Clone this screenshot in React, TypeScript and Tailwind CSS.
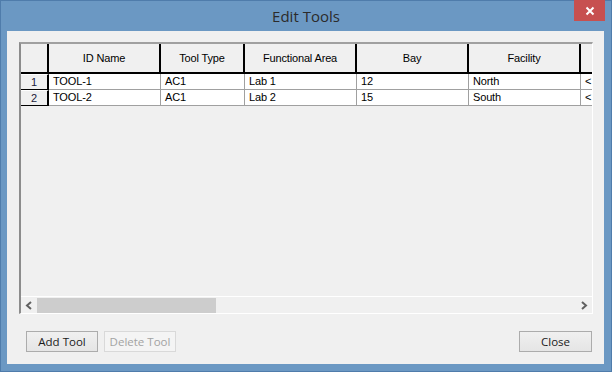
import React from 'react';

const cols = [
  { name: 'ID Name', w: 'w-[112px]' },
  { name: 'Tool Type', w: 'w-[84px]' },
  { name: 'Functional Area', w: 'w-[112px]' },
  { name: 'Bay', w: 'w-[112px]' },
  { name: 'Facility', w: 'w-[112px]' },
  { name: '', w: 'w-[60px]' },
];

const rows = [
  ['TOOL-1', 'AC1', 'Lab 1', '12', 'North', '<'],
  ['TOOL-2', 'AC1', 'Lab 2', '15', 'South', '<'],
];

const grid = { fontFamily: '"Liberation Sans", Arial, sans-serif' };
const ui = { fontFamily: '"Open Sans", "Noto Sans", sans-serif' };

function Chevron({ dir }: { dir: 'left' | 'right' }) {
  return (
    <svg width="8" height="9" viewBox="0 0 8 9" className="shrink-0">
      <polyline
        points={dir === 'left' ? '6,1 2,4.5 6,8' : '2,1 6,4.5 2,8'}
        fill="none"
        stroke="#606060"
        strokeWidth="2"
      />
    </svg>
  );
}

function Button({ label, disabled, w }: { label: string; disabled?: boolean; w: string }) {
  return (
    <button
      style={ui}
      className={`${w} h-[21px] text-[11.5px] leading-none border ${
        disabled
          ? 'border-[#d9d9d9] bg-[#f4f4f4] text-[#a3a3a3]'
          : 'border-[#acacac] bg-gradient-to-b from-[#f0f0f0] to-[#e5e5e5] text-[#1a1a1a]'
      }`}
    >
      {label}
    </button>
  );
}

export default function App() {
  return (
    <div className="relative w-[612px] h-[372px] bg-[#6b98c3] border border-[#4f7cab] flex flex-col px-[6px] pb-[7px]">
      <div
        style={ui}
        className="h-[30px] flex items-center justify-center text-[15px] text-[#2b2b2b] pt-[1px]"
      >
        Edit Tools
      </div>
      <div className="absolute -top-px right-[6px] w-[31px] h-[21px] bg-[#c75050] flex items-center justify-center">
        <svg width="10" height="10" viewBox="0 0 10 10">
          <path d="M1.5 1.5 L8.5 8.5 M8.5 1.5 L1.5 8.5" stroke="#fff" strokeWidth="2" />
        </svg>
      </div>

      <div className="flex-1 bg-[#f0f0f0] flex flex-col pt-[11px] pl-[12px] pr-[11px] pb-[12px] mr-px">
        <div
          style={grid}
          className="h-[272px] flex flex-col border-t-2 border-l-2 border-t-[#a0a0a0] border-l-[#8c8c8c] border-r border-b border-r-white border-b-white overflow-hidden text-[11px] tracking-[-0.15px] text-black"
        >
          <div className="flex-1 overflow-hidden">
            <div className="flex h-[30px] border-b-2 border-black">
              <div className="w-[28px] shrink-0 border-r-2 border-black" />
              {cols.map((c, i) => (
                <div
                  key={i}
                  className={`${c.w} shrink-0 border-r-2 border-black flex items-center justify-center`}
                >
                  {c.name}
                </div>
              ))}
            </div>
            {rows.map((r, i) => (
              <div key={i} className="flex h-[16px]">
                <div className="w-[28px] shrink-0 border-r-2 border-b border-black bg-[#f0f0f0] border-t border-t-white flex items-center justify-center text-[#1b1b3a]">
                  {i + 1}
                </div>
                {r.map((v, j) => (
                  <div
                    key={j}
                    className={`${cols[j].w} shrink-0 bg-white border-r border-b border-[#a0a0a0] px-[4px] flex items-center whitespace-nowrap overflow-hidden`}
                  >
                    {v}
                  </div>
                ))}
              </div>
            ))}
          </div>
          <div className="h-[17px] border-t border-white flex items-center">
            <div className="w-[16px] flex justify-center">
              <Chevron dir="left" />
            </div>
            <div className="w-[179px] h-[15px] bg-[#cdcdcd]" />
            <div className="flex-1" />
            <div className="w-[16px] flex justify-center">
              <Chevron dir="right" />
            </div>
          </div>
        </div>

        <div className="mt-[17px] flex items-center gap-[6px] pl-[7px] pr-px">
          <Button label="Add Tool" w="w-[72px]" />
          <Button label="Delete Tool" disabled w="w-[72px]" />
          <div className="flex-1" />
          <Button label="Close" w="w-[73px]" />
        </div>
      </div>
    </div>
  );
}
